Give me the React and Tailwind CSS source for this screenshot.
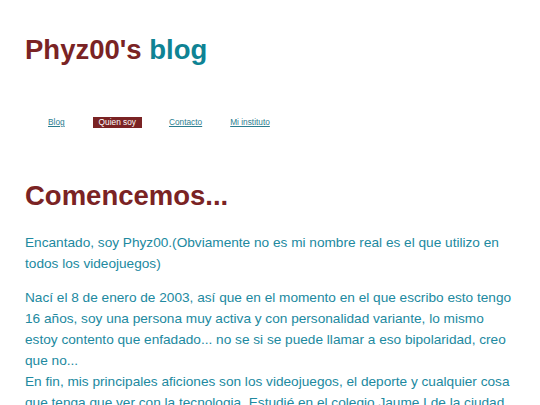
export default function App() {
  const links = [
    { label: 'Blog', active: false, gap: 'ml-0' },
    { label: 'Quien soy', active: true, gap: 'ml-[22px]' },
    { label: 'Contacto', active: false, gap: 'ml-[21px]' },
    { label: 'Mi instituto', active: false, gap: 'ml-[16px]' },
  ];

  return (
    <div className="min-h-screen bg-white font-['Liberation_Sans',Arial,sans-serif]">
      <div className="px-[25px]">
        <header className="pt-[33px]">
          <h1 className="text-[27.5px] font-bold leading-[34px] text-[#7a2324]">
            Phyz00's <span className="text-[#0e8394]">blog</span>
          </h1>
        </header>

        <nav className="mt-[50px] pl-[17px]">
          <ul className="flex items-center text-[8.3px] leading-[11px]">
            {links.map((link) => (
              <li key={link.label} className={link.gap}>
                <a
                  href="#"
                  className={
                    link.active
                      ? 'block px-[6px] bg-[#7a2324] text-white'
                      : 'block px-[6px] text-[#2b7d8f] underline'
                  }
                >
                  {link.label}
                </a>
              </li>
            ))}
          </ul>
        </nav>

        <main className="mt-[51px]">
          <h2 className="text-[27.5px] font-bold leading-[34px] text-[#7a2324]">Comencemos...</h2>

          <p className="mt-[19px] text-[13.65px] leading-[21px] text-[#2189a0]">
            Encantado, soy Phyz00.(Obviamente no es mi nombre real es el que utilizo en todos los videojuegos)
          </p>

          <p className="mt-[13px] text-[13.65px] leading-[21px] text-[#2189a0]">
            Nací el 8 de enero de 2003, así que en el momento en el que escribo esto tengo 16 años, soy una persona muy
            activa y con personalidad variante, lo mismo estoy contento que enfadado... no se si se puede llamar a eso
            bipolaridad, creo que no...
            <br />
            En fin, mis principales aficiones son los videojuegos, el deporte y cualquier cosa que tenga que ver con la
            tecnologia. Estudié en el colegio Jaume I de la ciudad de Vila-real.
          </p>
        </main>
      </div>
    </div>
  );
}
